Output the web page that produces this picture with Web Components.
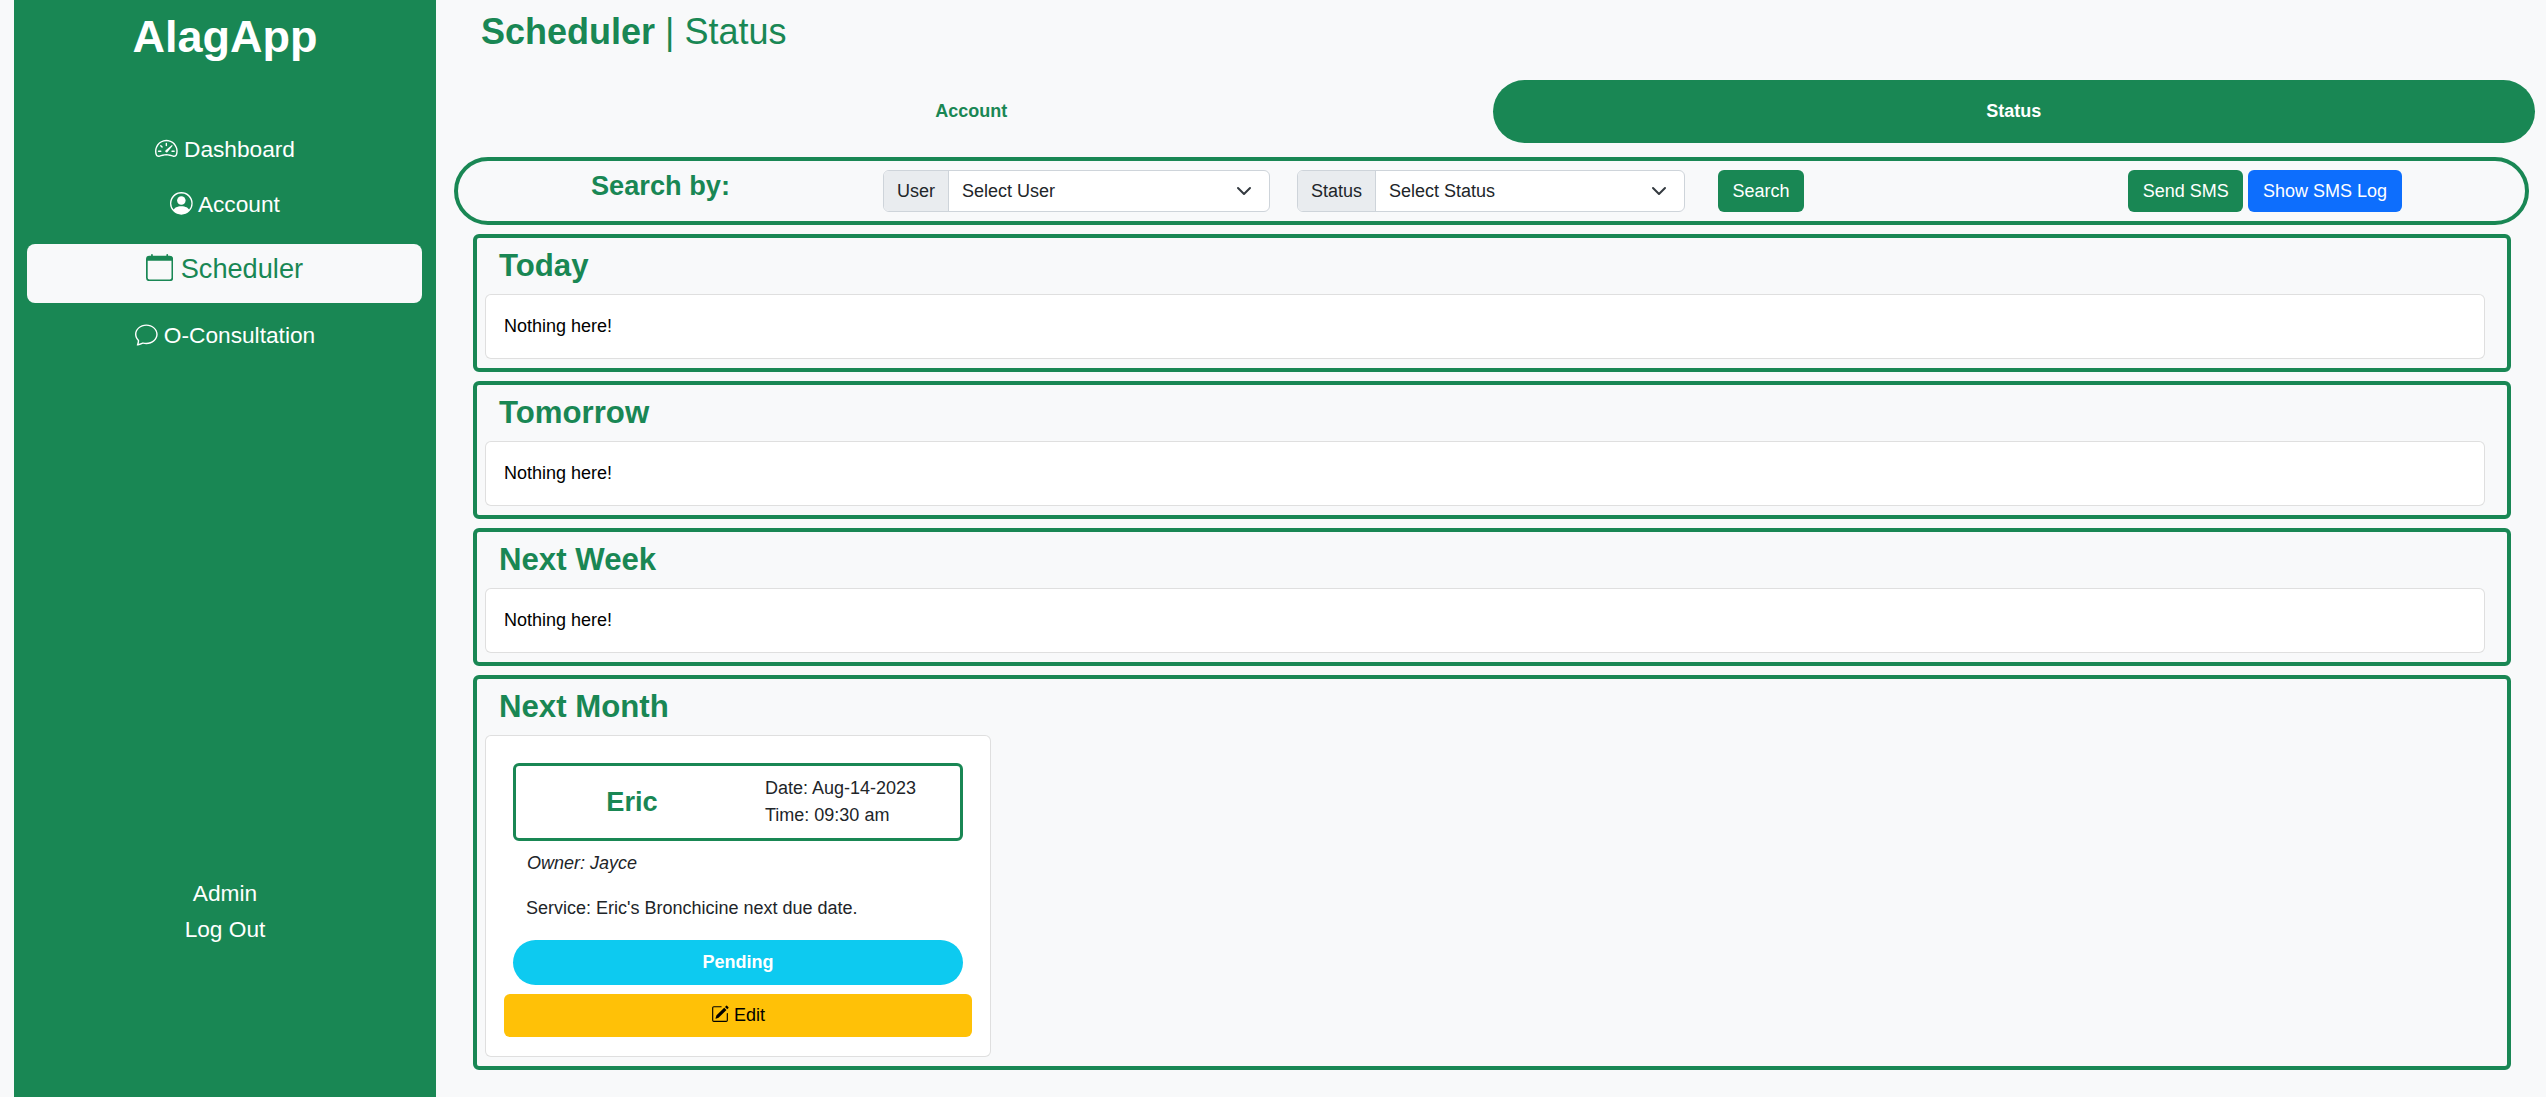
<!DOCTYPE html>
<html lang="en">
<head>
<meta charset="utf-8">
<title>AlagApp</title>
<style>
    html, body { margin: 0; height: 100%; background: #f8f9fa; }
    body { font-family: "Liberation Sans", Arial, sans-serif; color: #212529; overflow: hidden; }
</style>
</head>
<body>
<alag-shell>
    <alag-sidebar slot="side">
        <nav-link icon="speedometer">Dashboard</nav-link>
        <nav-link icon="person">Account</nav-link>
        <nav-link icon="calendar" active>Scheduler</nav-link>
        <nav-link icon="chat">O-Consultation</nav-link>
    </alag-sidebar>

    <page-title main="Scheduler" sub="Status"></page-title>
    <tab-bar></tab-bar>
    <search-bar></search-bar>

    <schedule-panel heading="Today"><empty-note>Nothing here!</empty-note></schedule-panel>
    <schedule-panel heading="Tomorrow"><empty-note>Nothing here!</empty-note></schedule-panel>
    <schedule-panel heading="Next Week"><empty-note>Nothing here!</empty-note></schedule-panel>
    <schedule-panel heading="Next Month">
        <appointment-card pet="Eric" date="Aug-14-2023" time="09:30 am" owner="Jayce"
            service="Eric's Bronchicine next due date." status="Pending"></appointment-card>
    </schedule-panel>
</alag-shell>

<script>
const ICONS = {
    speedometer: `<path d="M8 4a.5.5 0 0 1 .5.5V6a.5.5 0 0 1-1 0V4.5A.5.5 0 0 1 8 4zM3.732 5.732a.5.5 0 0 1 .707 0l.915.914a.5.5 0 1 1-.708.708l-.914-.915a.5.5 0 0 1 0-.707zM2 10a.5.5 0 0 1 .5-.5h1.586a.5.5 0 0 1 0 1H2.5A.5.5 0 0 1 2 10zm9.5 0a.5.5 0 0 1 .5-.5h1.5a.5.5 0 0 1 0 1H12a.5.5 0 0 1-.5-.5zm.754-4.246a.389.389 0 0 0-.527-.02L7.547 9.31a.91.91 0 1 0 1.302 1.258l3.434-4.297a.389.389 0 0 0-.029-.518z"/><path fill-rule="evenodd" d="M0 10a8 8 0 1 1 15.547 2.661c-.442 1.253-1.845 1.602-2.932 1.25C11.309 13.488 9.475 13 8 13c-1.474 0-3.31.488-4.615.911-1.087.352-2.49.003-2.932-1.25A7.988 7.988 0 0 1 0 10zm8-7a7 7 0 0 0-6.603 9.329c.203.575.923.876 1.68.63C4.397 12.533 6.358 12 8 12s3.604.532 4.923.96c.757.245 1.477-.056 1.68-.631A7 7 0 0 0 8 3z"/>`,
    person: `<path d="M11 6a3 3 0 1 1-6 0 3 3 0 0 1 6 0z"/><path fill-rule="evenodd" d="M0 8a8 8 0 1 1 16 0A8 8 0 0 1 0 8zm8-7a7 7 0 0 0-5.468 11.37C3.242 11.226 4.805 10 8 10s4.757 1.225 5.468 2.37A7 7 0 0 0 8 1z"/>`,
    calendar: `<path d="M3.5 0a.5.5 0 0 1 .5.5V1h8V.5a.5.5 0 0 1 1 0V1h1a2 2 0 0 1 2 2v11a2 2 0 0 1-2 2H2a2 2 0 0 1-2-2V3a2 2 0 0 1 2-2h1V.5a.5.5 0 0 1 .5-.5zM1 4v10a1 1 0 0 0 1 1h12a1 1 0 0 0 1-1V4H1z"/>`,
    chat: `<path d="M2.678 11.894a1 1 0 0 1 .287.801 10.97 10.97 0 0 1-.398 2c1.395-.323 2.247-.697 2.634-.893a1 1 0 0 1 .71-.074A8.06 8.06 0 0 0 8 14c3.996 0 7-2.807 7-6 0-3.192-3.004-6-7-6S1 4.808 1 8c0 1.468.617 2.83 1.678 3.894zm-.493 3.905a21.682 21.682 0 0 1-.713.129c-.2.032-.352-.176-.273-.362a9.68 9.68 0 0 0 .244-.637l.003-.01c.248-.72.45-1.548.524-2.319C.743 11.37 0 9.76 0 8c0-3.866 3.582-7 8-7s8 3.134 8 7-3.582 7-8 7a9.06 9.06 0 0 1-2.347-.306c-.52.263-1.639.742-3.468 1.105z"/>`,
    edit: `<path d="M15.502 1.94a.5.5 0 0 1 0 .706L14.459 3.69l-2-2L13.502.646a.5.5 0 0 1 .707 0l1.293 1.293zm-1.75 2.456-2-2L4.939 9.21a.5.5 0 0 0-.121.196l-.805 2.414a.25.25 0 0 0 .316.316l2.414-.805a.5.5 0 0 0 .196-.12l6.813-6.814z"/><path fill-rule="evenodd" d="M1 13.5A1.5 1.5 0 0 0 2.5 15h11a1.5 1.5 0 0 0 1.5-1.5v-6a.5.5 0 0 0-1 0v6a.5.5 0 0 1-.5.5h-11a.5.5 0 0 1-.5-.5v-11a.5.5 0 0 1 .5-.5H9a.5.5 0 0 0 0-1H2.5A1.5 1.5 0 0 0 1 2.5v11z"/>`,
};

const CHEVRON = `<svg viewBox="0 0 16 16" width="16" height="16" fill="none" stroke="#343a40" stroke-width="2" stroke-linecap="round" stroke-linejoin="round"><path d="m2 5 6 6 6-6"/></svg>`;

function iconSvg(name) {
    return `<svg class="bi" viewBox="0 0 16 16" width="1em" height="1em" fill="currentColor" aria-hidden="true">${ICONS[name]}</svg>`;
}

class AlagShell extends HTMLElement {
    constructor() {
        super();
        this.attachShadow({ mode: "open" });
        this.shadowRoot.innerHTML = `
        <style>
            :host { display: flex; height: 1097px; padding-left: 14px; box-sizing: border-box; }
            .content { flex: 1; min-width: 0; display: flex; flex-direction: column; }
        </style>
        <slot name="side"></slot>
        <div class="content"><slot></slot></div>
        `;
    }
}

class AlagSidebar extends HTMLElement {
    constructor() {
        super();
        this.attachShadow({ mode: "open" });
        this.shadowRoot.innerHTML = `
        <style>
            :host {
                display: flex;
                flex-direction: column;
                width: 422px;
                flex: none;
                background: #198754;
                color: #fff;
                text-align: center;
            }
            h1 { margin: 0; height: 124px; font-size: 45px; line-height: 73px; font-weight: 700; }
            nav { display: flex; flex-direction: column; height: 751px; }
            .user { font-size: 22.7px; line-height: 36px; }
        </style>
        <h1>AlagApp</h1>
        <nav><slot></slot></nav>
        <div class="user"><div>Admin</div><div>Log Out</div></div>
        `;
    }
}

class NavLink extends HTMLElement {
    constructor() {
        super();
        this.attachShadow({ mode: "open" });
    }

    connectedCallback() {
        const icon = this.getAttribute("icon");
        this.shadowRoot.innerHTML = `
        <style>
            :host { display: block; height: 55px; font-size: 22.7px; line-height: 50px; color: #fff; }
            :host([active]) {
                height: 59px;
                margin: 10px 14px 7px 13px;
                background: #f8f9fa;
                color: #198754;
                border-radius: 8px;
                font-size: 27.2px;
                line-height: 50px;
            }
            .bi { vertical-align: -0.125em; }
        </style>
        ${iconSvg(icon)} <slot></slot>
        `;
    }
}

class PageTitle extends HTMLElement {
    constructor() {
        super();
        this.attachShadow({ mode: "open" });
    }

    connectedCallback() {
        this.shadowRoot.innerHTML = `
        <style>
            :host {
                display: block;
                height: 80px;
                padding-left: 45px;
                box-sizing: border-box;
                color: #198754;
                font-size: 36px;
                line-height: 64px;
            }
            b { font-weight: 700; }
        </style>
        <b>${this.getAttribute("main")}</b> | ${this.getAttribute("sub")}
        `;
    }
}

class TabBar extends HTMLElement {
    constructor() {
        super();
        this.attachShadow({ mode: "open" });
        this.shadowRoot.innerHTML = `
        <style>
            :host {
                display: grid;
                grid-template-columns: 1fr 1fr;
                height: 63px;
                margin: 0 11px 14px 14px;
                font-size: 18px;
                font-weight: 700;
                text-align: center;
                line-height: 62px;
                color: #198754;
            }
            .tab { border-radius: 32px; }
            .active { background: #198754; color: #fff; }
        </style>
        <div class="tab">Account</div>
        <div class="tab active">Status</div>
        `;
    }
}

class SearchBar extends HTMLElement {
    constructor() {
        super();
        this.attachShadow({ mode: "open" });
        this.shadowRoot.innerHTML = `
        <style>
            :host {
                display: flex;
                align-items: center;
                height: 68px;
                margin: 0 17px 9px 18px;
                border: 4px solid #198754;
                border-radius: 34px;
                box-sizing: border-box;
                font-size: 18px;
            }
            h2 {
                width: 405px;
                margin: -10px 20px 0 0;
                text-align: center;
                font-size: 27.2px;
                line-height: 32px;
                color: #198754;
            }
            .group {
                display: flex;
                height: 42px;
                box-sizing: border-box;
                border: 1px solid #ced4da;
                border-radius: 6px;
                overflow: hidden;
                line-height: 40px;
                background: #fff;
            }
            .addon { background: #e9ecef; padding: 0 13px; border-right: 1px solid #ced4da; }
            .select { flex: 1; display: flex; align-items: center; justify-content: space-between; padding: 0 17px 0 13px; }
            .user { width: 387px; margin-right: 27px; }
            .status { width: 388px; margin-right: 33px; }
            .btn {
                height: 42px;
                padding: 0 14.6px;
                box-sizing: border-box;
                border-radius: 6px;
                line-height: 42px;
                color: #fff;
                background: #198754;
            }
            .send { margin-left: 324px; margin-right: 5px; }
            .log { background: #0d6efd; }
        </style>
        <h2>Search by:</h2>
        <div class="group user">
            <div class="addon">User</div>
            <div class="select">Select User ${CHEVRON}</div>
        </div>
        <div class="group status">
            <div class="addon">Status</div>
            <div class="select">Select Status ${CHEVRON}</div>
        </div>
        <div class="btn">Search</div>
        <div class="btn send">Send SMS</div>
        <div class="btn log">Show SMS Log</div>
        `;
    }
}

class SchedulePanel extends HTMLElement {
    constructor() {
        super();
        this.attachShadow({ mode: "open" });
    }

    connectedCallback() {
        this.shadowRoot.innerHTML = `
        <style>
            :host {
                display: block;
                margin: 0 35px 9px 37px;
                padding: 0 22px 9px 8px;
                border: 4px solid #198754;
                border-radius: 6px;
                box-sizing: border-box;
            }
            h3 {
                margin: 0;
                height: 56px;
                padding-left: 14px;
                font-size: 31.2px;
                line-height: 56px;
                color: #198754;
            }
        </style>
        <h3>${this.getAttribute("heading")}</h3>
        <slot></slot>
        `;
    }
}

class EmptyNote extends HTMLElement {
    constructor() {
        super();
        this.attachShadow({ mode: "open" });
        this.shadowRoot.innerHTML = `
        <style>
            :host {
                display: block;
                height: 65px;
                padding-left: 18px;
                box-sizing: border-box;
                background: #fff;
                border: 1px solid rgba(0, 0, 0, 0.125);
                border-radius: 6px;
                font-size: 18px;
                line-height: 63px;
                color: #000;
            }
        </style>
        <slot></slot>
        `;
    }
}

class AppointmentCard extends HTMLElement {
    constructor() {
        super();
        this.attachShadow({ mode: "open" });
    }

    connectedCallback() {
        const a = (n) => this.getAttribute(n);
        this.shadowRoot.innerHTML = `
        <style>
            :host {
                display: block;
                width: 506px;
                height: 322px;
                padding: 27px 18px 0;
                box-sizing: border-box;
                background: #fff;
                border: 1px solid rgba(0, 0, 0, 0.125);
                border-radius: 6px;
                font-size: 18px;
                color: #212529;
            }
            .head {
                display: grid;
                grid-template-columns: 232px 1fr;
                align-items: center;
                height: 78px;
                margin: 0 9px;
                box-sizing: border-box;
                border: 3px solid #198754;
                border-radius: 6px;
            }
            .pet { text-align: center; font-size: 27.2px; font-weight: 700; color: #198754; }
            .when { padding-left: 17px; line-height: 27px; }
            p { margin: 0 0 0 22px; }
            .owner { font-style: italic; line-height: 45px; margin-left: 23px; }
            .service { line-height: 45px; height: 54px; }
            .pill {
                height: 45px;
                margin: 0 9px 9px;
                border-radius: 23px;
                background: #0dcaf0;
                color: #fff;
                font-weight: 700;
                text-align: center;
                line-height: 44px;
            }
            .edit {
                height: 43px;
                border-radius: 6px;
                background: #ffc107;
                color: #000;
                text-align: center;
                line-height: 43px;
            }
            .bi { vertical-align: -0.125em; }
        </style>
        <div class="head">
            <div class="pet">${a("pet")}</div>
            <div class="when"><div>Date: ${a("date")}</div><div>Time: ${a("time")}</div></div>
        </div>
        <p class="owner">Owner: ${a("owner")}</p>
        <p class="service">Service: ${a("service")}</p>
        <div class="pill">${a("status")}</div>
        <div class="edit">${iconSvg("edit")} Edit</div>
        `;
    }
}

customElements.define("alag-shell", AlagShell);
customElements.define("alag-sidebar", AlagSidebar);
customElements.define("nav-link", NavLink);
customElements.define("page-title", PageTitle);
customElements.define("tab-bar", TabBar);
customElements.define("search-bar", SearchBar);
customElements.define("schedule-panel", SchedulePanel);
customElements.define("empty-note", EmptyNote);
customElements.define("appointment-card", AppointmentCard);
</script>
</body>
</html>
